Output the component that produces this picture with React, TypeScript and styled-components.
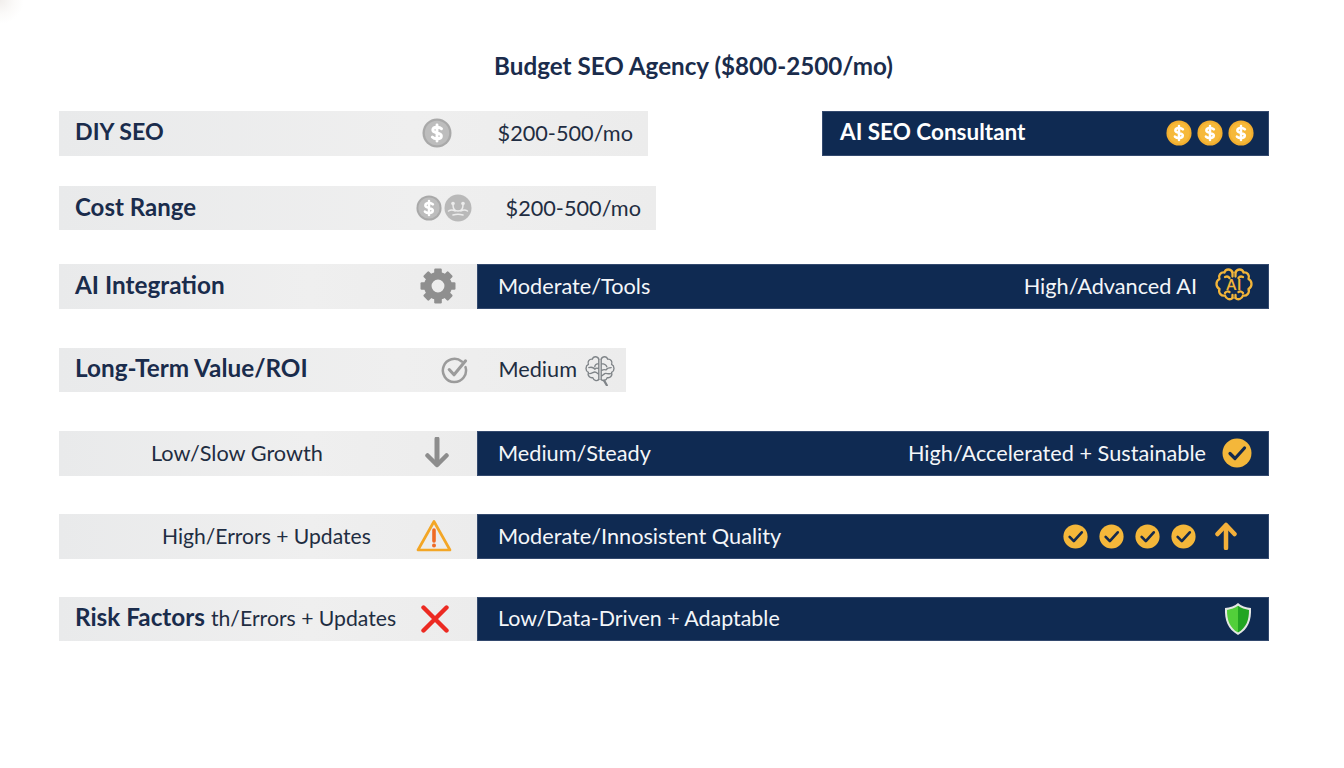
import React from "react";
import styled, { createGlobalStyle } from "styled-components";

const Global = createGlobalStyle`
  html, body { margin: 0; padding: 0; background: #fff; }
  body { font-family: "Lato", "Open Sans", sans-serif; color: #1d2c44; }
`;

const Page = styled.main`
  box-sizing: border-box;
  width: 1344px;
  height: 768px;
  overflow: hidden;
  padding: 51px 75px 0 59px;
  background: radial-gradient(circle at 0 0, #f1eeec 0, #fbfaf9 14px, #fff 24px) no-repeat;
`;

const Title = styled.h1`
  margin: 0 0 31px 0;
  height: 29px;
  line-height: 29px;
  text-align: center;
  font-size: 24.2px;
  font-weight: 700;
  color: #1a2c4c;
  padding-left: 59px;
`;

const Row = styled.div<{ $gap: number; $height?: number }>`
  display: flex;
  height: ${(p) => p.$height ?? 44.5}px;
  justify-content: space-between;
  margin-bottom: ${(p) => p.$gap}px;
`;

const GrayCell = styled.div<{ $width: number; $pad?: number }>`
  box-sizing: border-box;
  flex: none;
  width: ${(p) => p.$width}px;
  display: flex;
  align-items: center;
  padding: 0 ${(p) => p.$pad ?? 15}px 0 16px;
  background: linear-gradient(90deg, #e9eaeb 0%, #efefef 60%, #ececec 100%);
`;

const NavyCell = styled.div<{ $width: number }>`
  box-sizing: border-box;
  flex: none;
  width: ${(p) => p.$width}px;
  display: flex;
  align-items: center;
  justify-content: space-between;
  padding: 0 15px 0 21px;
  background: #0f2a52;
  box-shadow: inset 0 0 0 1px #33496e;
  color: #f4f6f9;
`;

const Label = styled.span<{ $size?: number }>`
  font-size: ${(p) => p.$size ?? 24.3}px;
  font-weight: 700;
  color: #1a2c4c;
  white-space: nowrap;
  margin-bottom: 4px;
`;

const NavyLabel = styled(Label)`
  color: #fff;
  margin-left: -3px;
`;

const Value = styled.span<{ $left?: number; $right?: number; $size?: number }>`
  font-size: ${(p) => p.$size ?? 21.7}px;
  white-space: nowrap;
  color: #1f2d42;
  margin: 0 ${(p) => p.$right ?? 0}px 1px ${(p) => p.$left ?? 0}px;
`;

const NavyText = styled.span<{ $size?: number }>`
  font-size: ${(p) => p.$size ?? 21.7}px;
  white-space: nowrap;
  margin-bottom: 1px;
`;

const Spacer = styled.span`
  flex: 1;
`;

const Group = styled.span<{ $gap: number; $right?: number }>`
  display: inline-flex;
  align-items: center;
  gap: ${(p) => p.$gap}px;
  margin-right: ${(p) => p.$right ?? 0}px;
`;

const IconSlot = styled.span<{ $left?: number; $right?: number }>`
  display: inline-flex;
  margin: 0 ${(p) => p.$right ?? 0}px 0 ${(p) => p.$left ?? 0}px;
`;

const GRAY = "#a9a9a9";

const Coin = ({ size = 30, fill = GRAY, ring = "#bdbdbd" }: { size?: number; fill?: string; ring?: string }) => (
  <svg width={size} height={size} viewBox="0 0 30 30">
    <circle cx="15" cy="15" r="14.5" fill={fill} />
    <circle cx="15" cy="15" r="12.2" fill={ring} />
    <path d="M19.5 10.8c-.9-1-2.600-1.600-4.500-1.600-2.400 0-4.200 1.100-4.200 2.900 0 3.900 8.600 1.900 8.600 5.900 0 1.800-1.900 2.900-4.400 2.900-2 0-3.700-.7-4.700-1.800M15 7v16" fill="none" stroke="#fff" strokeWidth="2.900" strokeLinecap="round" />
  </svg>
);

const FaceCoin = () => (
  <svg width="28" height="28" viewBox="0 0 28 28">
    <circle cx="14" cy="14" r="13.5" fill="#b9b9b9" />
    <circle cx="9" cy="9.500" r="1.800" fill="#ececec" />
    <circle cx="19" cy="9.500" r="1.800" fill="#ececec" />
    <path d="M9 11c0 4 2 6 5 6s5-2 5-6M4.500 17c3-2 5-1 6.500 0M23.500 17c-3-2-5-1-6.500 0M9 21c3-1 7-1 10 0" fill="none" stroke="#ececec" strokeWidth="1.500" strokeLinecap="round" />
  </svg>
);

const Gear = () => (
  <svg width="36" height="36" viewBox="0 0 36 36">
    <g fill="#8f8f8f">
      {[0, 45, 90, 135, 180, 225, 270, 315].map((a) => (
        <rect key={a} x="14.2" y="0.5" width="7.6" height="8" rx="1.2" transform={`rotate(${a} 18 18)`} />
      ))}
    </g>
    <circle cx="18" cy="18" r="10.2" fill="none" stroke="#8f8f8f" strokeWidth="7.5" />
  </svg>
);

const CheckRing = () => (
  <svg width="27" height="28" viewBox="0 0 28 28" fill="none" stroke="#9b9b9b" strokeLinecap="round" strokeLinejoin="round">
    <path d="M21.500 5.200A12 12 0 1 0 25.400 11" strokeWidth="2.600" />
    <path d="M8.500 13.500l5 5.500L25.500 4.500" strokeWidth="3.200" />
  </svg>
);

const BRAIN_LEFT = "M18.500 6.500C17 2.500 11.500 2.500 10.500 6.500 6.500 6 4 9.500 5.500 13 1.500 15 1.500 21 5.500 23 4 27 7.500 30.500 11 29.500 12 33 16 34.500 18.500 32";
const BRAIN_RIGHT = "M21.500 6.500C23 2.500 28.500 2.500 29.500 6.500 33.500 6 36 9.500 34.500 13 38.500 15 38.500 21 34.500 23 36 27 32.500 30.500 29 29.500 28 33 24 34.500 21.500 32";

const Brain = ({ color, size, ai }: { color: string; size: number; ai?: boolean }) => (
  <svg width={size} height={size} viewBox="0 0 40 40" fill="none" stroke={color} strokeWidth={ai ? 2.3 : 1.7} strokeLinecap="round" strokeLinejoin="round">
    <path d={BRAIN_LEFT} />
    <path d={BRAIN_RIGHT} />
    {ai ? (
      <>
        <path d="M18.500 6.500v4M21.500 6.500v4M11 11c2-1 3.500-.5 4.500 1M29 11c-2-1-3.500-.5-4.500 1M11 27c1-1.500 3-2 4.500-1M29 27c-1-1.500-3-2-4.500-1M18.500 32v-3M21.500 32v-3" />
        <text x="20" y="24" fontFamily="Lato, sans-serif" fontSize="14.500" fontWeight="700" fill={color} stroke="none" textAnchor="middle" letterSpacing="0.500">
          AI
        </text>
      </>
    ) : (
      <>
        <path d="M18.500 6.500V32M21.500 6.500V32M18.500 12c-3 0-5 2-5 4M6 17c3-1 6 0 7.500 2 2-2 3.500-1.500 5-.5M7 24.500c3 0 4.500-2 6.500-2s3.500 2 5 3M21.500 12c3 0 6 1 7 4M34 17c-3 0-5.500 1-6.500 3-2-1-4.500 0-6 1M33 24.500c-3 1-5-1-7 0s-2.500 3-4.500 3" />
        <path d="M25 33l3.500 6" strokeWidth="2.800" />
      </>
    )}
  </svg>
);

const GoldCheck = ({ size }: { size: number }) => (
  <svg width={size} height={size} viewBox="0 0 30 30">
    <circle cx="15" cy="15" r="14.500" fill="#f4b73a" />
    <path d="M8 15.500l5 5L22.500 10" fill="none" stroke="#13294d" strokeWidth="3.200" strokeLinecap="round" strokeLinejoin="round" />
  </svg>
);

const ArrowDown = () => (
  <svg width="24" height="32" viewBox="0 0 24 32" fill="none" stroke="#8d8d8d" strokeLinecap="round" strokeLinejoin="round">
    <path d="M12 2v25" strokeWidth="5" />
    <path d="M2.500 18.500L12 28l9.500-9.500" strokeWidth="4.500" />
  </svg>
);

const ArrowUp = () => (
  <svg width="22" height="28" viewBox="0 0 22 28" fill="none" stroke="#f4b03a" strokeLinecap="round" strokeLinejoin="round">
    <path d="M11 4v22" strokeWidth="4.500" />
    <path d="M2.500 12L11 3l8.500 9" strokeWidth="4.500" />
  </svg>
);

const Warning = () => (
  <svg width="36" height="34" viewBox="0 0 36 34">
    <path d="M18 2.500L34 31H2z" fill="none" stroke="#f3a626" strokeWidth="2.700" strokeLinejoin="round" />
    <path d="M18 11v11" stroke="#ef6a24" strokeWidth="3.600" strokeLinecap="round" />
    <circle cx="18" cy="26.500" r="2" fill="#ef6a24" />
  </svg>
);

const Cross = () => (
  <svg width="28" height="28" viewBox="0 0 28 28" fill="none" stroke="#ec2a22" strokeWidth="4.400" strokeLinecap="round">
    <path d="M2.500 2.500l23 23M25.500 2.500l-23 23" />
  </svg>
);

const Shield = () => (
  <svg width="28" height="34" viewBox="0 0 28 34">
    <path d="M14 1c3 3 8 4.500 13 5 .5 12-2.500 21-13 27C3.500 27 .5 18 1 6c5-.5 10-2 13-5z" fill="#e4e7e4" />
    <path d="M14 3.800c-3 2.400-7 3.600-11 4.100 0 10 2.500 17.500 11 22.700z" fill="#52cf3a" />
    <path d="M14 3.800c3 2.400 7 3.600 11 4.100 0 10-2.500 17.500-11 22.700z" fill="#22a522" />
  </svg>
);

export default function App() {
  return (
    <>
      <Global />
      <Page>
        <Title>Budget SEO Agency ($800-2500/mo)</Title>

        <Row $gap={30.5}>
          <GrayCell $width={589}>
            <Label $size={23.2}>DIY SEO</Label>
            <Spacer />
            <Coin />
            <Value $left={46}>$200-500/mo</Value>
          </GrayCell>
          <NavyCell $width={447}>
            <NavyLabel $size={22.5}>AI SEO Consultant</NavyLabel>
            <Group $gap={5}>
              <Coin size={26} fill="#f2ae2f" ring="#f6b93a" />
              <Coin size={26} fill="#f2ae2f" ring="#f6b93a" />
              <Coin size={26} fill="#f2ae2f" ring="#f6b93a" />
            </Group>
          </NavyCell>
        </Row>

        <Row $gap={34} $height={44}>
          <GrayCell $width={597}>
            <Label $size={24}>Cost Range</Label>
            <Spacer />
            <Group $gap={2}>
              <Coin size={26} />
              <FaceCoin />
            </Group>
            <Value $left={34}>$200-500/mo</Value>
          </GrayCell>
        </Row>

        <Row $gap={39.5}>
          <GrayCell $width={418} $pad={21}>
            <Label>AI Integration</Label>
            <Spacer />
            <Gear />
          </GrayCell>
          <NavyCell $width={792}>
            <NavyText>Moderate/Tools</NavyText>
            <Group $gap={17}>
              <NavyText>High/Advanced AI</NavyText>
              <Brain color="#f2b53a" size={40} ai />
            </Group>
          </NavyCell>
        </Row>

        <Row $gap={39.5} $height={43.5}>
          <GrayCell $width={567} $pad={10}>
            <Label>Long-Term Value/ROI</Label>
            <Spacer />
            <CheckRing />
            <Value $left={30} $right={7}>Medium</Value>
            <Brain color="#7f8488" size={32} />
          </GrayCell>
        </Row>

        <Row $gap={38.5}>
          <GrayCell $width={418} $pad={28}>
            <Value $left={76}>Low/Slow Growth</Value>
            <Spacer />
            <ArrowDown />
          </GrayCell>
          <NavyCell $width={792}>
            <NavyText>Medium/Steady</NavyText>
            <Group $gap={16} $right={2}>
              <NavyText>High/Accelerated + Sustainable</NavyText>
              <GoldCheck size={30} />
            </Group>
          </NavyCell>
        </Row>

        <Row $gap={38}>
          <GrayCell $width={418} $pad={25}>
            <Value $left={87} $size={21.1}>High/Errors + Updates</Value>
            <Spacer />
            <Warning />
          </GrayCell>
          <NavyCell $width={792}>
            <NavyText>Moderate/Innosistent Quality</NavyText>
            <Group $gap={11} $right={17}>
              <GoldCheck size={25} />
              <GoldCheck size={25} />
              <GoldCheck size={25} />
              <GoldCheck size={25} />
              <IconSlot $left={8}>
                <ArrowUp />
              </IconSlot>
            </Group>
          </NavyCell>
        </Row>

        <Row $gap={0}>
          <GrayCell $width={418} $pad={28}>
            <Label>Risk Factors</Label>
            <Value $left={6} $size={21.2}>th/Errors + Updates</Value>
            <Spacer />
            <Cross />
          </GrayCell>
          <NavyCell $width={792}>
            <NavyText $size={21.4}>Low/Data-Driven + Adaptable</NavyText>
            <IconSlot $right={2}>
              <Shield />
            </IconSlot>
          </NavyCell>
        </Row>
      </Page>
    </>
  );
}
